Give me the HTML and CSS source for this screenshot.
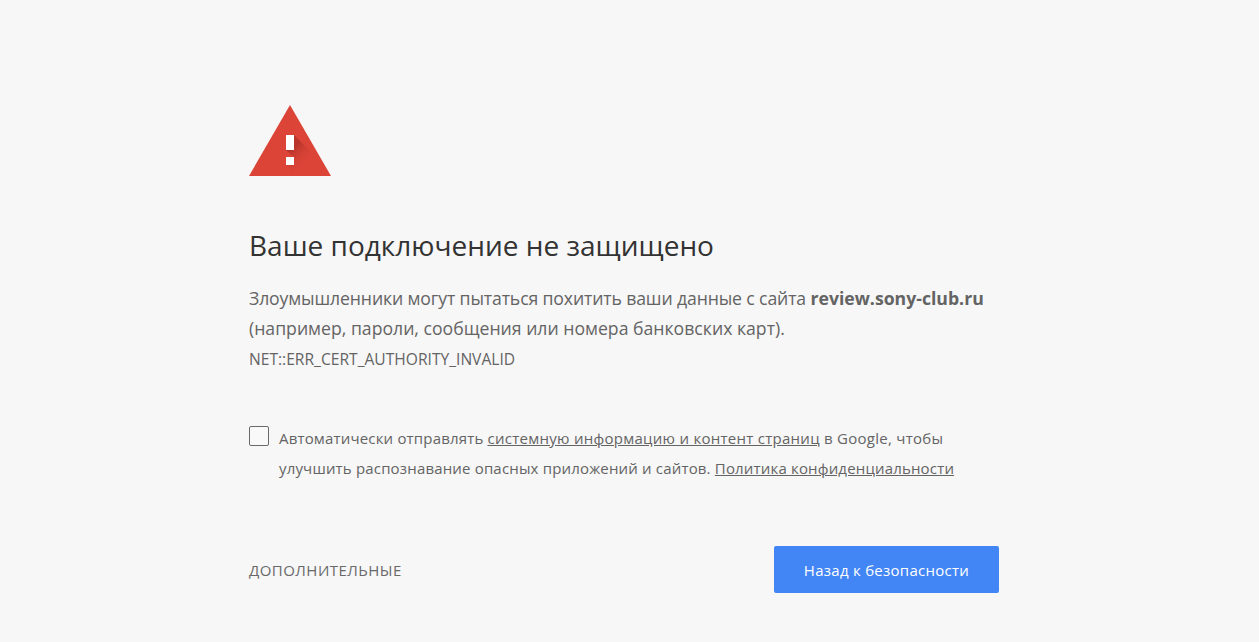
FILE: index.html
```
<!DOCTYPE html>
<html lang="ru">
<head>
    <meta charset="UTF-8">
    <meta name="viewport" content="width=device-width, initial-scale=1.0">
    <title>Ошибка безопасности</title>
    <link rel="stylesheet" href="styles.css">
</head>
<body>
    <main class="interstitial">
        <svg class="icon" viewBox="0 0 82 71" aria-hidden="true">
            <defs>
                <linearGradient id="shade" gradientUnits="userSpaceOnUse" x1="41" y1="46" x2="55" y2="60">
                    <stop offset="0" stop-color="#a92e25" stop-opacity=".7"/>
                    <stop offset="1" stop-color="#db4437" stop-opacity="0"/>
                </linearGradient>
            </defs>
            <path fill="#db4437" d="M41 0 82 71H0z"/>
            <path fill="url(#shade)" d="M45 30 72 57V71H48L37 60H45V52L37 45H45z"/>
            <path fill="#fff" d="M37 30h8v15h-8zM37 52h8v8h-8z"/>
        </svg>

        <h1 class="title">Ваше подключение не защищено</h1>
        <p class="message">
            <span class="message-lead">Злоумышленники могут пытаться похитить ваши данные с сайта </span><strong>review.sony-club.ru</strong><br>
            (например, пароли, сообщения или номера банковских карт).
        </p>
        <div class="error-code">NET::ERR_CERT_AUTHORITY_INVALID</div>

        <div class="report">
            <input type="checkbox" class="report-checkbox" id="report">
            <label class="report-text" for="report">
                Автоматически отправлять <a class="report-link" href="#">системную информацию и контент страниц</a><span class="report-link"> в Google, чтобы</span><br>
                улучшить распознавание опасных приложений и сайтов. <a href="#">Политика конфиденциальности</a>
            </label>
        </div>

        <div class="actions">
            <button class="details-btn">Дополнительные</button>
            <button class="primary-btn">Назад к безопасности</button>
        </div>
    </main>
</body>
</html>
```
FILE: styles.css
```
body {
    margin: 0;
    background: #f7f7f7;
    color: #646464;
    font-family: "Open Sans", "Noto Sans", sans-serif;
}

.interstitial {
    width: 750px;
    margin-left: 249px;
    padding-top: 105px;
}

.icon {
    display: block;
    width: 82px;
    height: 71px;
}

.title {
    margin: 49px 0 0;
    color: #333;
    font-size: 28px;
    font-weight: 400;
    line-height: 40px;
    white-space: nowrap;
}

.message {
    margin: 18px 0 0;
    font-size: 17.65px;
    line-height: 30px;
    white-space: nowrap;
}

.message-lead {
    letter-spacing: -0.13px;
}

.error-code {
    margin-top: 5px;
    font-size: 15.6px;
    line-height: 22px;
}

.report {
    display: flex;
    gap: 10px;
    margin-top: 53px;
}

.report-checkbox {
    flex: none;
    appearance: none;
    width: 20px;
    height: 20px;
    margin: 3px 0 0;
    border: 1px solid #696969;
    border-radius: 2px;
    background: #f9f9f9;
}

.report-text {
    font-size: 15px;
    letter-spacing: 0.17px;
    line-height: 30px;
    white-space: nowrap;
}

.report-link {
    letter-spacing: 0.27px;
}

.report-text a {
    color: inherit;
}

.actions {
    display: flex;
    justify-content: space-between;
    align-items: center;
    margin-top: 63px;
}

.details-btn,
.primary-btn {
    border: 0;
    padding: 0;
    font-family: inherit;
    font-size: 15px;
    cursor: pointer;
}

.details-btn {
    background: none;
    color: #696969;
    letter-spacing: 0.46px;
    text-transform: uppercase;
}

.primary-btn {
    width: 225px;
    height: 47px;
    border-radius: 2px;
    background: #4285f4;
    color: #fff;
    letter-spacing: 0.27px;
}
```
